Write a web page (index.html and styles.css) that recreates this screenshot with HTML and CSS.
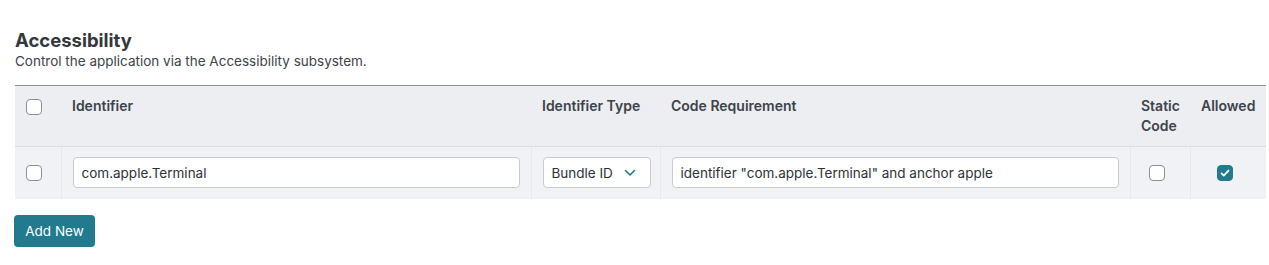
FILE: index.html
```html
<!DOCTYPE html>
<html lang="en">
<head>
  <meta charset="UTF-8">
  <title>Accessibility</title>
  <link rel="stylesheet" href="styles.css">
</head>
<body>
  <section class="panel">
    <h2 class="panel-title">Accessibility</h2>
    <p class="panel-desc">Control the application via the Accessibility subsystem.</p>

    <table class="rules">
      <colgroup>
        <col class="col-check">
        <col class="col-ident">
        <col class="col-type">
        <col class="col-req">
        <col class="col-static">
        <col class="col-allowed">
      </colgroup>
      <thead>
        <tr>
          <th class="cell-check"><span class="box"></span></th>
          <th>Identifier</th>
          <th>Identifier Type</th>
          <th>Code Requirement</th>
          <th>Static Code</th>
          <th>Allowed</th>
        </tr>
      </thead>
      <tbody>
        <tr>
          <td class="cell-check"><span class="box"></span></td>
          <td><input class="field" type="text" value="com.apple.Terminal"></td>
          <td>
            <div class="select">
              <span>Bundle ID</span>
              <svg class="chevron" viewBox="0 0 12 8" fill="none" stroke="currentColor" stroke-width="1.6" stroke-linecap="round" stroke-linejoin="round">
                <path d="M1.5 1.5L6 6l4.5-4.5"></path>
              </svg>
            </div>
          </td>
          <td><input class="field" type="text" value='identifier "com.apple.Terminal" and anchor apple'></td>
          <td class="cell-static"><span class="box"></span></td>
          <td class="cell-allowed">
            <span class="box checked">
              <svg viewBox="0 0 16 16" fill="none" stroke="#fff" stroke-width="2" stroke-linecap="round" stroke-linejoin="round">
                <path d="M4 8.5l2.6 2.5L12 5.2"></path>
              </svg>
            </span>
          </td>
        </tr>
      </tbody>
    </table>

    <button class="add-btn">Add New</button>
  </section>
</body>
</html>
```

FILE: styles.css
```css
* {
  margin: 0;
  padding: 0;
  box-sizing: border-box;
}

:root {
  --text: #3c434a;
  --head-bg: #edeef1;
  --row-bg: #f0f2f5;
  --line: #dcdde1;
  --accent: #217a8e;
}

body {
  font-family: Inter, "Noto Sans", sans-serif;
  font-size: 13.5px;
  color: var(--text);
  background: #fff;
}

.panel {
  padding: 29px 3px 0 15px;
}

.panel-title {
  font-size: 18.5px;
  font-weight: 700;
  line-height: 22px;
  color: #32373c;
}

.panel-desc {
  font-size: 13.5px;
  line-height: 20px;
  margin-bottom: 14px;
}

.rules {
  width: 100%;
  border-collapse: collapse;
  table-layout: fixed;
  border-top: 1px solid #8c8f94;
}

.col-check { width: 46px; }
.col-ident { width: 470px; }
.col-type { width: 129px; }
.col-req { width: 470px; }
.col-static { width: 60px; }
.col-allowed { width: 76px; }

.rules th {
  background: var(--head-bg);
  font-size: 14px;
  font-weight: 600;
  text-align: left;
  vertical-align: top;
  line-height: 20px;
  padding: 10px 11px;
  height: 60px;
  border-bottom: 1px solid var(--line);
}

.rules th:nth-child(5) {
  padding-right: 6px;
}

.rules td {
  background: var(--row-bg);
  padding: 10px 11px;
  height: 52px;
  border-left: 1px solid #e7e9ec;
  vertical-align: middle;
}

.rules td:first-child {
  border-left: none;
}

.rules .cell-check {
  padding: 13px 0 0 11px;
}

.rules td.cell-check {
  padding: 1px 0 0 11px;
}

.box {
  display: block;
  width: 16px;
  height: 16px;
  border: 1px solid #8c8f94;
  border-radius: 4px;
  background: #fff;
}

.cell-static .box {
  margin-left: 7px;
}

.cell-allowed .box {
  margin-left: 15px;
}

.box.checked {
  background: var(--accent);
  border-color: var(--accent);
}

.box.checked svg {
  display: block;
  width: 14px;
  height: 14px;
}

.field {
  display: block;
  width: 100%;
  height: 31px;
  padding: 0 8px;
  font: inherit;
  font-size: 13.5px;
  color: #2c3338;
  background: #fff;
  border: 1px solid #c9cbcf;
  border-radius: 4px;
}

.select {
  display: flex;
  align-items: center;
  justify-content: space-between;
  height: 31px;
  padding: 0 14px 0 8px;
  color: #2c3338;
  background: #fff;
  border: 1px solid #c9cbcf;
  border-radius: 4px;
  width: 108px;
}

.chevron {
  width: 12px;
  height: 8px;
  color: var(--accent);
}

.add-btn {
  margin-top: 16px;
  margin-left: -1px;
  width: 81px;
  height: 32px;
  font: inherit;
  font-size: 13.5px;
  color: #fff;
  background: var(--accent);
  border: none;
  border-radius: 4px;
  cursor: pointer;
}
```
